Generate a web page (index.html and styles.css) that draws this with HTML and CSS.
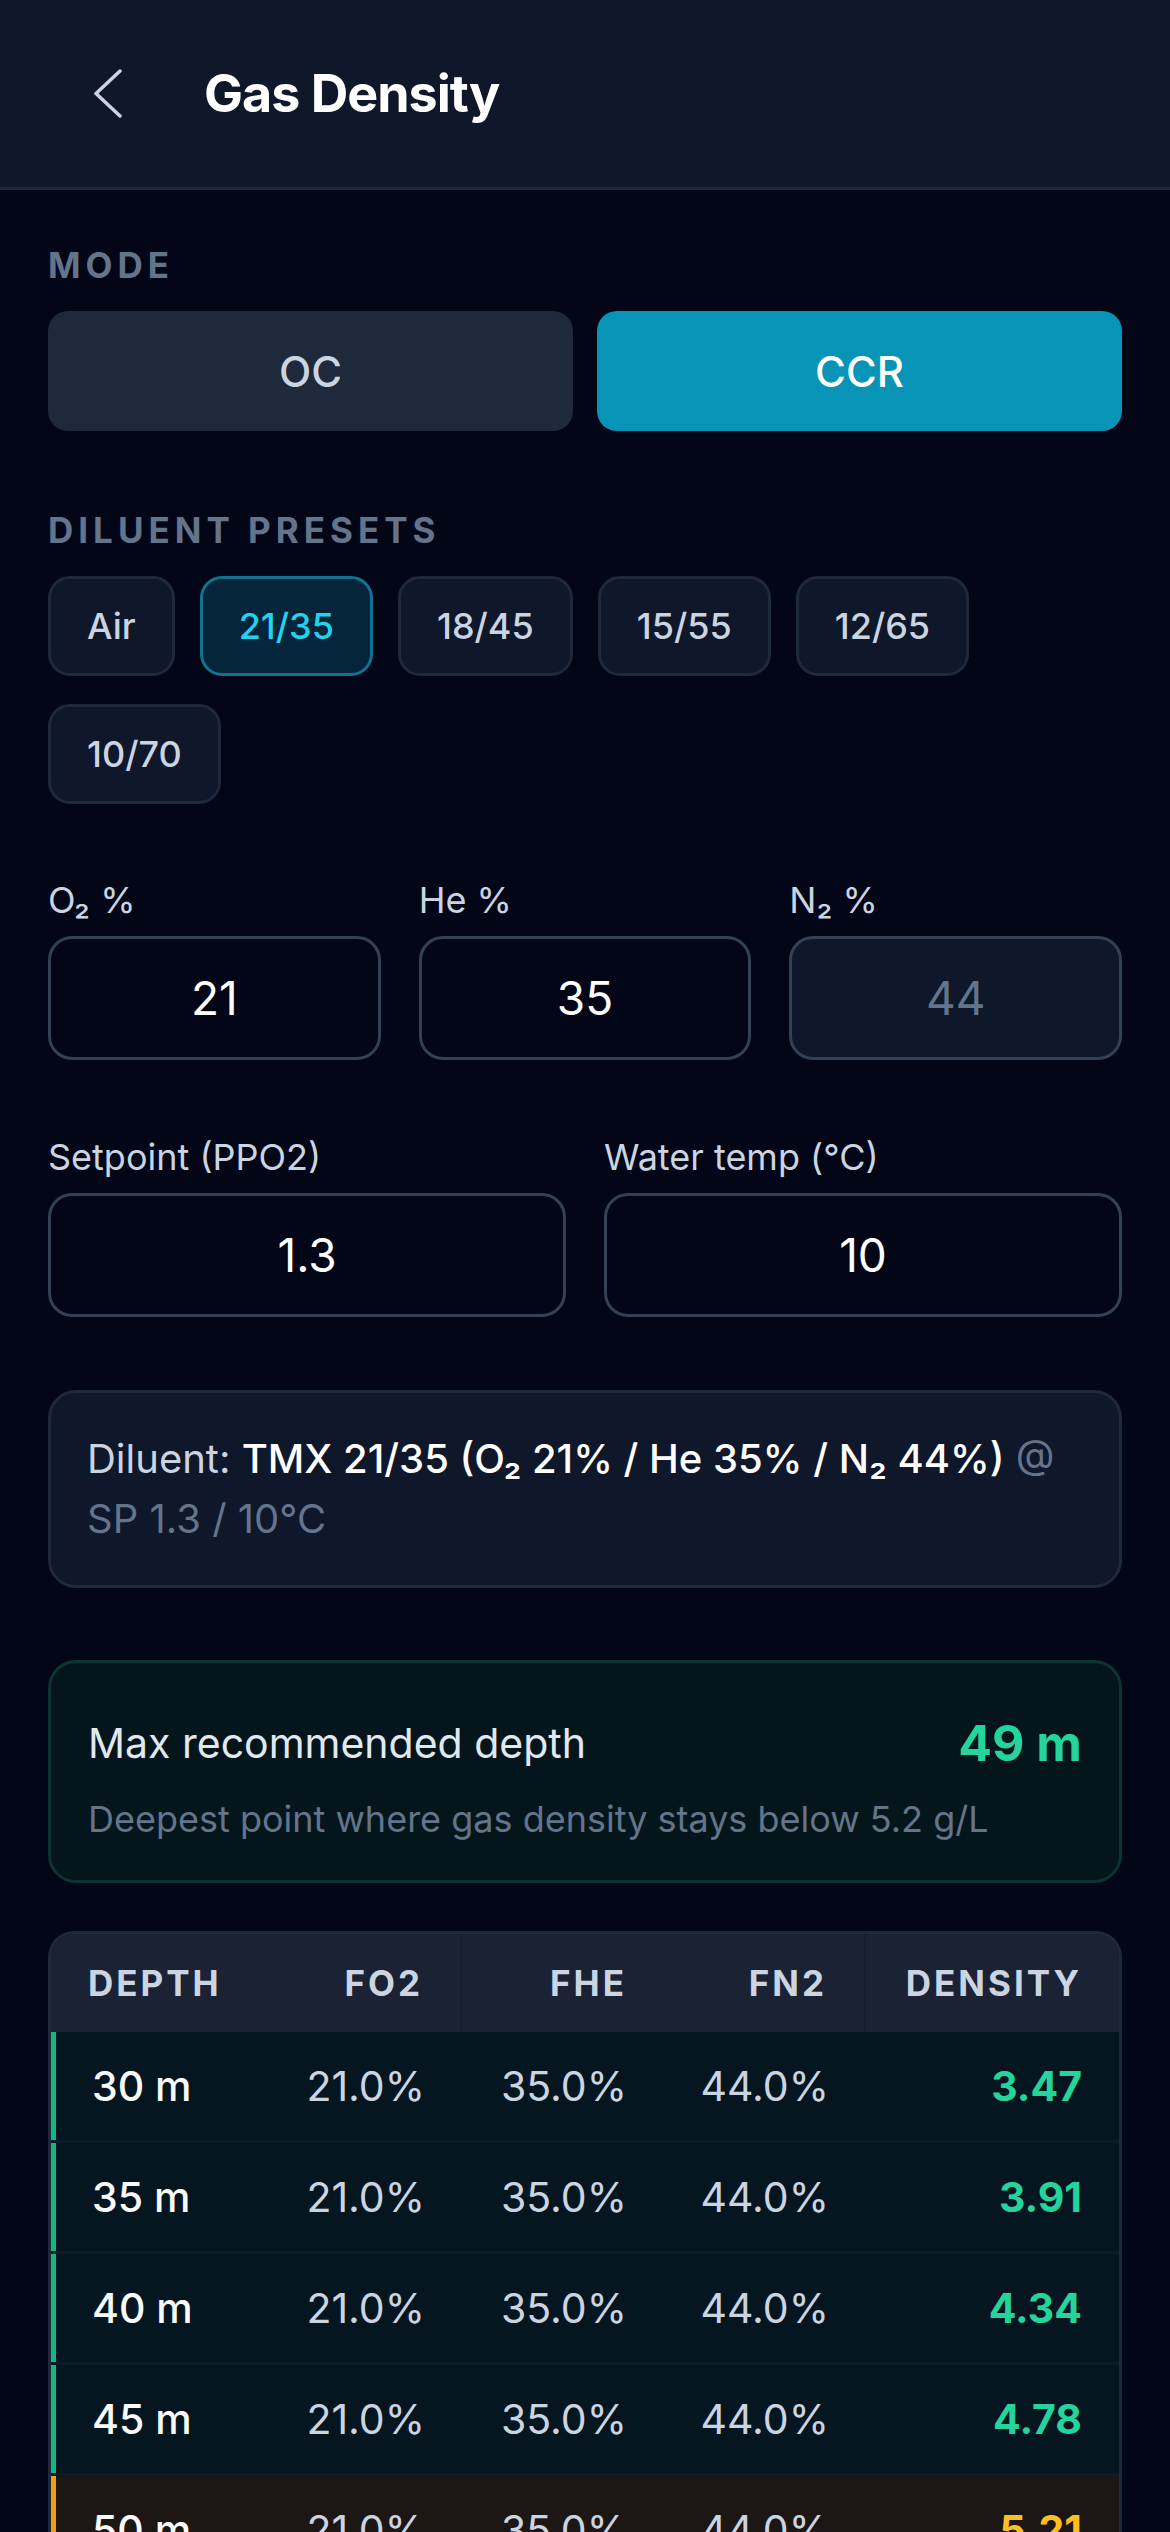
FILE: index.html
```html
<!DOCTYPE html>
<html lang="en">
<head>
<meta charset="utf-8">
<title>Gas Density</title>
<link rel="stylesheet" href="styles.css">
</head>
<body>
<div class="app">
  <header class="topbar">
    <svg class="back" viewBox="0 0 28 49" aria-hidden="true">
      <polyline points="26,2 2,24.5 26,47" fill="none" stroke="#cbd5e1" stroke-width="3.5" stroke-linecap="round" stroke-linejoin="round"/>
    </svg>
    <h1 class="title">Gas Density</h1>
  </header>

  <main class="content">
    <div class="section-label">MODE</div>
    <div class="mode-row">
      <div class="mode-btn">OC</div>
      <div class="mode-btn active">CCR</div>
    </div>

    <div class="section-label presets-label">DILUENT PRESETS</div>
    <div class="chips">
      <div class="chip">Air</div>
      <div class="chip active">21/35</div>
      <div class="chip">18/45</div>
      <div class="chip">15/55</div>
      <div class="chip">12/65</div>
      <div class="chip">10/70</div>
    </div>

    <div class="field-grid gas-grid">
      <div class="field">
        <div class="field-label">O₂ %</div>
        <input class="field-input" type="text" value="21" aria-label="O2 %">
      </div>
      <div class="field">
        <div class="field-label">He %</div>
        <input class="field-input" type="text" value="35" aria-label="He %">
      </div>
      <div class="field">
        <div class="field-label">N₂ %</div>
        <input class="field-input readonly" type="text" value="44" readonly aria-label="N2 %">
      </div>
    </div>

    <div class="field-grid env-grid">
      <div class="field">
        <div class="field-label">Setpoint (PPO2)</div>
        <input class="field-input" type="text" value="1.3" aria-label="Setpoint">
      </div>
      <div class="field">
        <div class="field-label">Water temp (°C)</div>
        <input class="field-input" type="text" value="10" aria-label="Water temp">
      </div>
    </div>

    <div class="summary">
      Diluent: <span class="strong">TMX 21/35 (O₂ 21% / He 35% / N₂ 44%)</span> <span class="muted">@ SP 1.3 / 10°C</span>
    </div>

    <div class="max-card">
      <div class="max-row">
        <span class="max-label">Max recommended depth</span>
        <span class="max-value">49 m</span>
      </div>
      <div class="max-sub">Deepest point where gas density stays below 5.2 g/L</div>
    </div>

    <div class="table">
      <div class="thead">
        <div class="th left">DEPTH</div>
        <div class="th sep">FO2</div>
        <div class="th">FHE</div>
        <div class="th sep">FN2</div>
        <div class="th">DENSITY</div>
      </div>
      <div class="tr ok">
        <div class="td depth">30 m</div><div class="td pct">21.0%</div><div class="td pct">35.0%</div><div class="td pct">44.0%</div><div class="td dens">3.47</div>
      </div>
      <div class="tr ok">
        <div class="td depth">35 m</div><div class="td pct">21.0%</div><div class="td pct">35.0%</div><div class="td pct">44.0%</div><div class="td dens">3.91</div>
      </div>
      <div class="tr ok">
        <div class="td depth">40 m</div><div class="td pct">21.0%</div><div class="td pct">35.0%</div><div class="td pct">44.0%</div><div class="td dens">4.34</div>
      </div>
      <div class="tr ok">
        <div class="td depth">45 m</div><div class="td pct">21.0%</div><div class="td pct">35.0%</div><div class="td pct">44.0%</div><div class="td dens">4.78</div>
      </div>
      <div class="tr warn">
        <div class="td depth">50 m</div><div class="td pct">21.0%</div><div class="td pct">35.0%</div><div class="td pct">44.0%</div><div class="td dens">5.21</div>
      </div>
    </div>
  </main>
</div>
</body>
</html>
```
FILE: styles.css
```css
* {
  box-sizing: border-box;
  margin: 0;
  padding: 0;
}

html, body {
  background: #020617;
}

body {
  font-family: Inter, "Noto Sans", sans-serif;
  color: #e2e8f0;
}

.app {
  width: 1170px;
  height: 2532px;
  overflow: hidden;
}

/* Top bar */
.topbar {
  height: 190px;
  background: #0f172a;
  border-bottom: 3px solid #1e293b;
  display: flex;
  align-items: center;
  padding-left: 94px;
}

.back {
  width: 28px;
  height: 49px;
  margin-right: 82px;
  flex: none;
}

.title {
  font-size: 52px;
  font-weight: 700;
  letter-spacing: -1px;
  color: #ffffff;
}

/* Content */
.content {
  padding: 54px 48px 0;
}

.section-label {
  font-size: 35px;
  line-height: 42px;
  font-weight: 700;
  letter-spacing: 5px;
  color: #64748b;
}

.presets-label {
  margin-top: 78px;
}

.mode-row {
  display: grid;
  grid-template-columns: 1fr 1fr;
  gap: 24px;
  margin-top: 25px;
}

.mode-btn {
  height: 120px;
  border-radius: 20px;
  background: #1e293b;
  color: #cbd5e1;
  font-size: 42px;
  font-weight: 500;
  display: flex;
  align-items: center;
  justify-content: center;
}

.mode-btn.active {
  background: #0894b6;
  color: #ffffff;
}

/* Preset chips */
.chips {
  display: flex;
  flex-wrap: wrap;
  gap: 28px 25px;
  margin-top: 25px;
}

.chip {
  height: 100px;
  padding: 0 36px;
  border: 3px solid #1e293b;
  background: #0f172a;
  border-radius: 22px;
  color: #cbd5e1;
  font-size: 36px;
  font-weight: 500;
  display: flex;
  align-items: center;
  justify-content: center;
}

.chip.active {
  background: #04253a;
  border-color: #0e7490;
  color: #22d3ee;
}

/* Fields */
.field-grid {
  display: grid;
  gap: 38px;
}

.gas-grid {
  grid-template-columns: repeat(3, 1fr);
  margin-top: 75px;
}

.env-grid {
  grid-template-columns: 1fr 1fr;
  margin-top: 76px;
}

.field {
  display: flex;
  flex-direction: column;
  gap: 14px;
}

.field-label {
  font-size: 36px;
  line-height: 43px;
  color: #cbd5e1;
}

.field-input {
  display: block;
  width: 100%;
  height: 124px;
  border: 3px solid #334155;
  border-radius: 24px;
  background: transparent;
  font-family: inherit;
  font-size: 46px;
  color: #ffffff;
  text-align: center;
  outline: none;
}

.field-input.readonly {
  background: #0f172a;
  color: #64748b;
}

/* Summary */
.summary {
  margin-top: 73px;
  background: #0f172a;
  border: 3px solid #1e293b;
  border-radius: 28px;
  padding: 36px 36px;
  font-size: 40px;
  line-height: 60px;
  color: #cbd5e1;
}

.summary .strong {
  color: #ffffff;
  font-weight: 500;
}

.summary .muted {
  color: #64748b;
}

/* Max depth card */
.max-card {
  margin-top: 72px;
  background: #04161b;
  border: 3px solid #0b3530;
  border-radius: 28px;
  padding: 51px 37px 38px;
}

.max-row {
  display: flex;
  justify-content: space-between;
  align-items: center;
  height: 58px;
}

.max-label {
  font-size: 41px;
  color: #e2e8f0;
}

.max-value {
  font-size: 50px;
  line-height: 58px;
  font-weight: 700;
  color: #25d39c;
}

.max-sub {
  margin-top: 25px;
  font-size: 36px;
  line-height: 45px;
  color: #64748b;
}

/* Table */
.table {
  margin-top: 48px;
  border: 3px solid #1e293b;
  border-bottom: none;
  border-radius: 26px 26px 0 0;
  overflow: hidden;
  background: #0f172a;
}

.thead,
.tr {
  display: grid;
  grid-template-columns: 209px 202px 202px 202px 1fr;
}

.thead {
  height: 98px;
  background: #1a2234;
}

.th {
  display: flex;
  align-items: center;
  justify-content: flex-end;
  padding: 0 37px;
  font-size: 35px;
  font-weight: 700;
  letter-spacing: 3px;
  color: #cbd5e1;
}

.th.left {
  justify-content: flex-start;
}

.th.sep {
  border-right: 2px solid #151d2d;
}

.tr {
  height: 111px;
  background: #051621;
  border-bottom: 3px solid #0b1c28;
}

.td {
  display: flex;
  align-items: center;
  justify-content: flex-end;
  padding: 0 37px;
  font-size: 41px;
}

.td.depth {
  justify-content: flex-start;
  padding-left: 36px;
  color: #f8fafc;
  font-weight: 500;
}

.tr.ok .td.depth {
  border-left: 5px solid #10b981;
}

.tr.warn .td.depth {
  border-left: 5px solid #f59e0b;
}

.td.pct {
  color: #cbd5e1;
}

.td.dens {
  font-weight: 700;
}

.tr.ok .td.dens {
  color: #25d39c;
}

.tr.warn {
  background: #1c1615;
}

.tr.warn .td.dens {
  color: #fbbf24;
}
```
